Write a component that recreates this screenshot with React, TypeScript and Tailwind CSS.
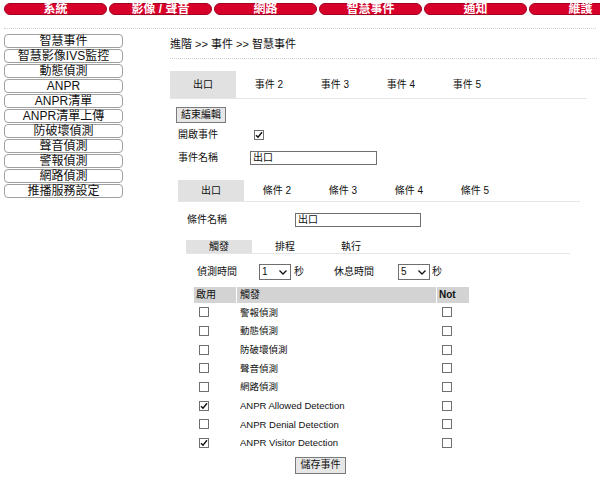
import React from 'react';

const topTabs = ['系統', '影像 / 聲音', '網路', '智慧事件', '通知', '維護'];

const sideItems = [
  '智慧事件',
  '智慧影像IVS監控',
  '動態偵測',
  'ANPR',
  'ANPR清單',
  'ANPR清單上傳',
  '防破壞偵測',
  '聲音偵測',
  '警報偵測',
  '網路偵測',
  '推播服務設定',
];

const triggers = [
  { label: '警報偵測', on: false },
  { label: '動態偵測', on: false },
  { label: '防破壞偵測', on: false },
  { label: '聲音偵測', on: false },
  { label: '網路偵測', on: false },
  { label: 'ANPR Allowed Detection', on: true },
  { label: 'ANPR Denial Detection', on: false },
  { label: 'ANPR Visitor Detection', on: true },
];

function CheckBox({ checked }: { checked: boolean }) {
  return (
    <svg width="10" height="10" viewBox="0 0 10 10" className="block">
      <rect x="0.5" y="0.5" width="9" height="9" fill="#fff" stroke="#6f6f6f" />
      {checked && <path d="M2 5.2 L4 7.3 L8 2.2" fill="none" stroke="#111" strokeWidth="1.4" />}
    </svg>
  );
}

function Select({ value }: { value: string }) {
  return (
    <div className="flex h-[16px] w-[32px] items-center justify-between border border-[#6f6f6f] bg-white pl-[2px] pr-[3px] text-[10px] leading-none">
      <span>{value}</span>
      <svg width="8" height="5" viewBox="0 0 8 5">
        <path d="M0.5 0.5 L4 4 L7.5 0.5" fill="none" stroke="#111" strokeWidth="1.3" />
      </svg>
    </div>
  );
}

function TextBox({ value, width }: { value: string; width: string }) {
  return (
    <div className={`flex h-[14px] items-center border border-[#6f6f6f] bg-white pl-[2px] text-[10px] leading-none ${width}`}>
      {value}
    </div>
  );
}

function Tabs({ items, height, width }: { items: string[]; height: string; width: string }) {
  return (
    <div className={`flex border-b border-[#e6e6e6] ${width}`}>
      {items.map((t, i) => (
        <div
          key={t}
          className={`flex w-[66px] items-center justify-center text-[10px] leading-none ${height} ${
            i === 0 ? 'bg-[#e1e1e1]' : ''
          }`}
        >
          {t}
        </div>
      ))}
    </div>
  );
}

export default function App() {
  return (
    <div className="h-[480px] w-[600px] overflow-hidden bg-white font-['Liberation_Sans','Noto_Sans_CJK_TC',sans-serif] text-[#111]">
      <nav className="flex gap-[2px] overflow-hidden pl-[4px] pt-[3px]">
        {topTabs.map((t) => (
          <div
            key={t}
            className="flex h-[12px] w-[103px] shrink-0 items-center justify-center rounded-[6px] border border-[#a3001f] bg-[#d6002b] text-[12px] font-bold leading-none text-white"
          >
            {t}
          </div>
        ))}
      </nav>
      <div className="mx-[4px] mt-[13px] border-t border-dotted border-[#cfcfcf]" />

      <div className="flex">
        <aside className="ml-[4px] mt-[5px] flex w-[119px] shrink-0 flex-col gap-[1px]">
          {sideItems.map((s) => (
            <div
              key={s}
              className="flex h-[14px] items-center justify-center rounded-[4px] border border-[#a0a0a0] bg-white text-[12px] leading-none"
            >
              {s}
            </div>
          ))}
        </aside>

        <main className="ml-[47px] flex w-[427px] flex-col">
          <div className="pt-[9px] text-[11px] leading-[12px]">進階 &gt;&gt; 事件 &gt;&gt; 智慧事件</div>
          <div className="mt-[8px] border-t border-dotted border-[#cfcfcf]" />

          <div className="mt-[12px]">
            <Tabs items={['出口', '事件 2', '事件 3', '事件 4', '事件 5']} height="h-[27px]" width="w-[417px]" />
          </div>

          <button className="ml-[6px] mt-[8px] flex h-[16px] w-[50px] items-center justify-center border border-[#7a7a7a] bg-[#e6e6e6] text-[10px] leading-none">
            結束編輯
          </button>

          <div className="ml-[8px] mt-[5px] flex h-[14px] items-center text-[10px] leading-none">
            <span className="w-[76px]">開啟事件</span>
            <CheckBox checked />
          </div>

          <div className="ml-[8px] mt-[9px] flex items-center text-[10px] leading-none">
            <span className="w-[72px]">事件名稱</span>
            <TextBox value="出口" width="w-[127px]" />
          </div>

          <div className="ml-[8px] mt-[15px]">
            <Tabs items={['出口', '條件 2', '條件 3', '條件 4', '條件 5']} height="h-[21px]" width="w-[402px]" />
          </div>

          <div className="ml-[17px] mt-[11px] flex items-center text-[10px] leading-none">
            <span className="w-[108px]">條件名稱</span>
            <TextBox value="出口" width="w-[126px]" />
          </div>

          <div className="ml-[16px] mt-[13px]">
            <Tabs items={['觸發', '排程', '執行']} height="h-[13px]" width="w-[384px]" />
          </div>

          <div className="ml-[27px] mt-[10px] flex items-center text-[10px] leading-none">
            <span className="w-[62px]">偵測時間</span>
            <Select value="1" />
            <span className="ml-[3px]">秒</span>
            <span className="ml-[30px] w-[64px]">休息時間</span>
            <Select value="5" />
            <span className="ml-[2px]">秒</span>
          </div>

          <div className="ml-[24px] mt-[7px] w-[275px] text-[10px] leading-none">
            <div className="grid h-[16px] grid-cols-[42px_199px_32px] gap-x-[1px]">
              <div className="flex items-center bg-[#d3d3d3] pl-[2px]">啟用</div>
              <div className="flex items-center bg-[#d3d3d3] pl-[3px]">觸發</div>
              <div className="flex items-center bg-[#d3d3d3] pl-[2px] font-bold">Not</div>
            </div>
            {triggers.map((r) => (
              <div key={r.label} className="grid h-[18.7px] grid-cols-[42px_199px_32px] items-center gap-x-[1px]">
                <div className="pl-[5px]">
                  <CheckBox checked={r.on} />
                </div>
                <div className="pl-[3px] text-[9.5px]">{r.label}</div>
                <div className="pl-[5px]">
                  <CheckBox checked={false} />
                </div>
              </div>
            ))}
          </div>

          <button className="ml-[125px] mt-[4px] flex h-[17px] w-[51px] items-center justify-center border border-[#7a7a7a] bg-[#e6e6e6] text-[10px] leading-none">
            儲存事件
          </button>
        </main>
      </div>
    </div>
  );
}
